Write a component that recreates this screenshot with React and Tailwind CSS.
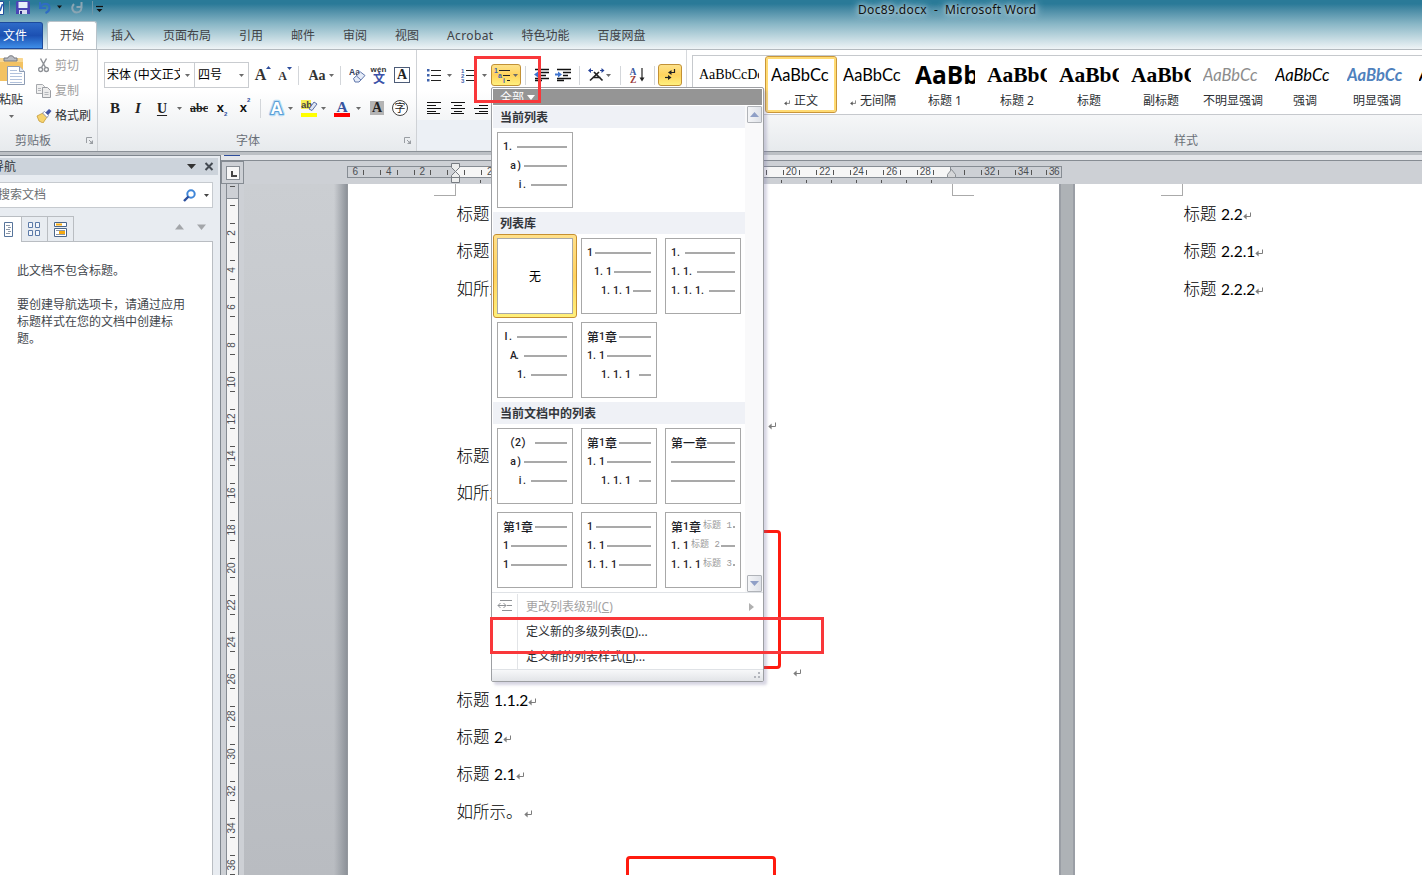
import React from "react";

const CJK = "font-['Noto_Sans','Noto_Sans_CJK_SC',sans-serif]";

/* ---------- small shared pieces ---------- */

function Drop({ className = "", color = "#6b6b6b" }) {
  return (
    <svg className={"shrink-0 " + className} width="5" height="3" viewBox="0 0 5 3">
      <path d="M0 0h5L2.5 3z" fill={color} />
    </svg>
  );
}

function Sep({ className = "" }) {
  return <div className={"h-[19px] w-px shrink-0 bg-[#d3d6da] " + className} />;
}

function Cell({ className = "", children }) {
  return <div className={"flex h-[22px] shrink-0 items-center justify-center " + className}>{children}</div>;
}

function Return({ className = "", color = "#7d7d7d", size = 8 }) {
  return (
    <svg className={"shrink-0 " + className} width={size} height={size} viewBox="0 0 8 8">
      <path d="M7.5 0.5V4.5H1" fill="none" stroke={color} />
      <path d="M0.300 4.500L3.600 1.600V7.400z" fill={color} />
    </svg>
  );
}

function Launcher({ className = "" }) {
  return (
    <svg className={className} width="8" height="8" viewBox="0 0 8 8">
      <path d="M0.5 6V0.5H6" fill="none" stroke="#9a9ea3" />
      <path d="M3 3L6 6" stroke="#9a9ea3" />
      <path d="M7 3v4H3z" fill="#9a9ea3" />
    </svg>
  );
}

/* ---------- title bar ---------- */

function TitleBar() {
  return (
    <div className="flex h-[21px] items-start">
      <svg className="mt-[1px] shrink-0" width="110" height="15" viewBox="0 0 110 15">
        <path d="M0 0.500h3.500v13H0" fill="#fff" stroke="#24509c" />
        <path d="M0 10L2.500 3" stroke="#2b5db5" strokeWidth="1.600" />
        <path d="M9.500 0v14M92.500 0v14" stroke="#6d97a9" />
        <path d="M17 0h12l1 1v12H16V1z" fill="#4a45b5" />
        <rect x="18.500" y="1" width="9" height="6" fill="#e8eefb" />
        <rect x="19" y="9" width="8" height="4" fill="#d8dcf0" />
        <rect x="20" y="10" width="2" height="3" fill="#2f2b86" />
        <path d="M40 1v6h6M40.500 6.500c2-5 8.500-5 9 0c0.300 3-2 4.500-4 5.500" fill="none" stroke="#2f6cc4" strokeWidth="2" />
        <path d="M57 4.500h5l-2.500 3z" fill="#111" />
        <path d="M81.500 1v5h-5M74 3c-3 3-2 8 2.500 8.500c4 0 6-3 4.500-7" fill="none" stroke="#8aa5b3" strokeWidth="2" />
        <path d="M96 5.500h7" stroke="#111" strokeWidth="1.200" />
        <path d="M96.500 8h6l-3 3z" fill="#111" />
      </svg>
      <div className="ml-[748px] mt-[2px] whitespace-pre text-[12px] leading-4 tracking-[0.35px] text-[#111] [text-shadow:0_0_5px_#cfe3ea,0_0_8px_#cfe3ea,0_0_10px_#b4d2dc]">
        Doc89.docx  -  Microsoft Word
      </div>
    </div>
  );
}

function TabStrip() {
  const tabs = ["插入", "页面布局", "引用", "邮件", "审阅", "视图", "Acrobat", "特色功能", "百度网盘"];
  return (
    <div className="flex h-[28px] items-end text-[12px] leading-[18px] text-[#3f4246]">
      <div className="flex h-[27px] w-[43px] items-center rounded-tr-[3px] border border-l-0 border-[#1d4a9c] bg-gradient-to-b from-[#2f6bc8] via-[#1c50b2] to-[#3f8ee8] pl-[3px] text-white">
        文件
      </div>
      <div className="ml-[4px] flex h-[28px] w-[50px] items-center justify-center rounded-t-[3px] border border-b-0 border-[#b9c3ca] bg-white">
        开始
      </div>
      <div className="ml-[14px] flex h-[26px] items-center gap-[28px]">
        {tabs.map((t) => (
          <span key={t} className={t === "Acrobat" ? "tracking-[0.35px]" : ""}>{t}</span>
        ))}
      </div>
    </div>
  );
}

/* ---------- ribbon ---------- */

function Clipboard() {
  return (
    <div className="flex w-[98px] shrink-0 flex-col border-r border-[#cfd2d6]">
      <div className="flex h-[83px]">
        <div className="flex w-[36px] flex-col items-start">
          <svg className="mt-[5px]" width="26" height="32" viewBox="0 0 26 32">
            <path d="M0 3h22l1 1v22H0z" fill="#f3c262" />
            <path d="M0 3h22l1 1v3H0z" fill="#f9d78f" />
            <path d="M4 6V3h4c0-3 6-3 6 0h3v3z" fill="#b9bcc2" stroke="#77797f" />
            <path d="M7.500 11.500h12l5 5v13h-17z" fill="#fff" stroke="#8d9cb4" />
            <path d="M19.500 11.500v5h5" fill="#dfe7f3" stroke="#8d9cb4" />
            <path d="M10 15.500h7M10 18.500h12M10 21.500h12M10 24.500h12M10 27.500h12" stroke="#b2c2dc" />
          </svg>
          <div className="-ml-px mt-[4px] text-[12px] leading-[18px] text-[#2c2f33]">粘贴</div>
          <Drop className="ml-[9px] mt-[6px]" />
        </div>
        <div className="flex flex-col pt-[3px] text-[12px] leading-[25px]">
          <div className="flex h-[25px] items-center text-[#a0a0a0]">
            <svg className="ml-[2px] mr-[6px]" width="11" height="15" viewBox="0 0 11 15">
              <path d="M2.500 0.500L7.500 9.500M8.500 0.500L3.500 9.500" stroke="#8e9196" strokeWidth="1.500" />
              <circle cx="2.600" cy="11.500" r="2" fill="none" stroke="#8e9196" strokeWidth="1.400" />
              <circle cx="8.400" cy="11.500" r="2" fill="none" stroke="#8e9196" strokeWidth="1.400" />
            </svg>
            剪切
          </div>
          <div className="flex h-[25px] items-center text-[#a0a0a0]">
            <svg className="mr-[4px]" width="15" height="14" viewBox="0 0 15 14">
              <path d="M0.500 0.500h6l2 2v7h-8z" fill="#f0f0f0" stroke="#a6a9ad" />
              <path d="M6.500 3.500h5l3 3v7h-8z" fill="#ececec" stroke="#9a9da2" />
              <path d="M2 4.500h3M2 6.500h3M8.500 8.500h4M8.500 10.500h4" stroke="#b5b8bc" />
            </svg>
            复制
          </div>
          <div className="flex h-[25px] items-center text-[#2c2f33]">
            <svg className="mr-[3px]" width="16" height="14" viewBox="0 0 16 14">
              <path d="M1 7l6-3 4 4-4 6L3 12z" fill="#f6d36e" stroke="#c59a37" strokeWidth="0.800" />
              <path d="M6.500 4l2-1.500 4 4-1.500 2z" fill="#fff" stroke="#7880a8" strokeWidth="0.800" />
              <path d="M9.500 3.500L13 0l2.500 2-3.300 4z" fill="#4457a5" />
            </svg>
            格式刷
          </div>
        </div>
      </div>
      <div className="flex h-[16px] items-center pl-[15px] text-[12px] leading-4 text-[#6a7078]">
        剪贴板
        <Launcher className="ml-[35px]" />
      </div>
    </div>
  );
}

const serif = "font-['Liberation_Serif',serif] ";

function FontGroup() {
  return (
    <div className="flex w-[319px] shrink-0 flex-col border-r border-[#cfd2d6] pl-[6px]">
      <div className="mt-[12px] flex h-[26px] items-center">
        <div className="flex h-[26px] w-[91px] items-center border border-[#c9ccd0] bg-white">
          <span className="ml-[2px] w-[73px] overflow-hidden whitespace-nowrap text-[12px] leading-[18px] text-black">宋体 (中文正文)</span>
          <Drop className="ml-[5px]" />
        </div>
        <div className="flex h-[26px] w-[54px] items-center border border-l-0 border-[#c9ccd0] bg-white">
          <span className="ml-[3px] w-[40px] text-[12px] leading-[18px] text-black">四号</span>
          <Drop className="ml-px" />
        </div>
        <Cell className={serif + "ml-[3px] w-[22px] items-start text-[16px] font-bold leading-[22px] text-[#333]"}>
          A
          <svg className="mt-[2px]" width="5" height="3" viewBox="0 0 5 3"><path d="M0 3h5L2.500 0z" fill="#2d4d9c" /></svg>
        </Cell>
        <Cell className={serif + "w-[22px] items-start text-[12px] font-bold leading-[24px] text-[#333]"}>
          A
          <Drop className="mt-[3px]" color="#2d4d9c" />
        </Cell>
        <Sep className="ml-[2px]" />
        <Cell className={serif + "ml-[6px] w-[32px] text-[14px] font-bold text-[#333]"}>
          Aa
          <Drop className="ml-[3px]" />
        </Cell>
        <Sep className="ml-[3px]" />
        <Cell className="ml-[5px] w-[22px]">
          <svg width="17" height="16" viewBox="0 0 17 16">
            <text x="0" y="7.500" fontSize="8.500" fontWeight="bold" fontFamily="Liberation Sans" fill="#33415e">Aa</text>
            <path d="M4.500 11.500l7-6.500 4.500 3.500-6 6.500h-4z" fill="#e6ecf8" stroke="#5f76ab" />
            <path d="M7.500 9l4.500 4" stroke="#5f76ab" />
          </svg>
        </Cell>
        <Cell className="w-[22px]">
          <svg width="18" height="18" viewBox="0 0 18 18">
            <text x="0.500" y="6" fontSize="8" fontWeight="bold" fontFamily="Liberation Sans" fill="#333" textLength="16">wén</text>
            <text x="3" y="16.500" fontSize="12" fontWeight="bold" fontFamily="Noto Sans CJK SC" fill="#3b51a8">文</text>
          </svg>
        </Cell>
        <div className={serif + "ml-[4px] flex h-[16px] w-[16px] items-center justify-center border border-[#4d5c78] bg-white text-[14px] font-bold leading-none text-[#222]"}>A</div>
      </div>
      <div className={serif + "mt-[9px] flex h-[22px] items-center text-[15px] font-bold text-[#222]"}>
        <Cell className="w-[22px]">B</Cell>
        <Cell className="ml-[1px] w-[22px] italic">I</Cell>
        <Cell className="ml-[2px] w-[22px] text-[14px] underline underline-offset-2">U</Cell>
        <Drop className="ml-[4px]" />
        <Cell className="ml-[6px] w-[22px] text-[12px] line-through">abc</Cell>
        <Cell className="ml-[1px] w-[22px] font-['Liberation_Sans'] text-[13px] text-[#111]">
          x<sub className="mt-[9px] text-[6px] leading-none text-[#2d4d9c]">2</sub>
        </Cell>
        <Cell className="ml-[1px] w-[22px] font-['Liberation_Sans'] text-[13px] text-[#111]">
          x<sup className="mb-[10px] text-[6px] leading-none text-[#2d4d9c]">2</sup>
        </Cell>
        <Sep className="ml-[4px]" />
        <Cell className="ml-[5px] w-[22px]">
          <svg width="18" height="18" viewBox="0 0 18 18">
            <text x="2.500" y="15" fontSize="17" fontFamily="Liberation Sans" fill="#fff" stroke="#b9dcf5" strokeWidth="4.500" strokeLinejoin="round">A</text>
            <text x="2.500" y="15" fontSize="17" fontFamily="Liberation Sans" fill="#fff" stroke="#5b9fd6" strokeWidth="2.200">A</text>
            <text x="2.500" y="15" fontSize="17" fontFamily="Liberation Sans" fill="#fff">A</text>
          </svg>
        </Cell>
        <Drop />
        <Cell className="ml-[5px] w-[22px]">
          <svg width="17" height="18" viewBox="0 0 17 18">
            <rect x="0" y="1" width="10" height="9" fill="#f6ef55" />
            <text x="0" y="9" fontSize="9.500" fontWeight="bold" fontFamily="Liberation Sans" fill="#444">ab</text>
            <path d="M8 10l5-7 3 2-5 6.500z" fill="#dfe6f4" stroke="#5b6fa6" />
            <rect x="0" y="14" width="16" height="4" fill="#ff0" />
          </svg>
        </Cell>
        <Drop className="ml-[1px]" />
        <Cell className="ml-[6px] w-[20px]">
          <svg width="16" height="18" viewBox="0 0 16 18">
            <text x="2.500" y="12.500" fontSize="15.500" fontWeight="bold" fontFamily="Liberation Serif" fill="#38549f">A</text>
            <rect y="14" width="16" height="4" fill="#f00" />
          </svg>
        </Cell>
        <Drop className="ml-[4px]" />
        <div className="ml-[9px] flex h-[14px] w-[14px] items-center justify-center bg-[#b4b4b4] text-[14px] leading-none">A</div>
        <svg className="ml-[7px]" width="18" height="18" viewBox="0 0 18 18">
          <circle cx="9" cy="9" r="7.500" fill="#fff" stroke="#444" />
          <text x="3.500" y="13" fontSize="11" fontWeight="400" fontFamily="Noto Sans CJK SC" fill="#222">字</text>
        </svg>
      </div>
      <div className="mt-[14px] flex h-[16px] items-center pl-[132px] text-[12px] leading-4 text-[#6a7078]">
        字体
        <Launcher className="ml-[144px]" />
      </div>
    </div>
  );
}

function AlignIcon({ d, className = "" }) {
  return (
    <svg className={className} width="14" height="12" viewBox="0 0 14 12">
      <path d={d} stroke="#111" />
    </svg>
  );
}

function ParagraphGroup() {
  return (
    <div className="flex w-[270px] shrink-0 flex-col border-r border-[#d6d9dd] pl-[10px]">
      <div className="mt-[12px] flex h-[26px] items-center">
        <svg className="shrink-0" width="15" height="14" viewBox="0 0 15 14">
          <path d="M4 2.500h10M4 7.500h10M4 12.500h10" stroke="#222" />
          <path d="M0 1h2.500v2.500H0zM0 6h2.500v2.500H0zM0 11h2.500v2.500H0z" fill="#3f63ad" />
        </svg>
        <Drop className="ml-[5px]" />
        <svg className="ml-[9px] shrink-0" width="15" height="15" viewBox="0 0 15 15">
          <path d="M5 2.500h9M5 7.500h9M5 12.500h9" stroke="#222" />
          <g fontSize="6" fontWeight="bold" fontFamily="Liberation Sans" fill="#3f63ad">
            <text x="0" y="5">1</text><text x="0" y="10">2</text><text x="0" y="15">3</text>
          </g>
        </svg>
        <Drop className="ml-[6px]" />
        <div className="ml-[4px] flex h-[22px] w-[30px] shrink-0 items-center rounded-[3px] border border-[#c29136] bg-gradient-to-b from-[#fde28a] via-[#ffd35c] to-[#fff07e] pl-[2px]">
          <svg className="shrink-0" width="17" height="15" viewBox="0 0 17 15">
            <path d="M5 2.500h11M9 7.500h7M13 12.500h3" stroke="#222" />
            <g fontSize="7" fontWeight="bold" fontFamily="Liberation Sans" fill="#3f63ad">
              <text x="0" y="5">1</text><text x="4" y="10">a</text><text x="9" y="15">i</text>
            </g>
          </svg>
          <Drop className="ml-[2px]" />
        </div>
        <Sep className="ml-[4px]" />
        <svg className="ml-[7px] shrink-0" width="17" height="14" viewBox="0 0 17 14">
          <path d="M2 1.500h14M8 4.500h8M8 7.500h5M2 10.500h14M2 12.500h7" stroke="#111" strokeWidth="1.300" />
          <path d="M1 6.500l4-3v2h3v2H5v2z" fill="#3f74cf" />
        </svg>
        <svg className="ml-[5px] shrink-0" width="17" height="14" viewBox="0 0 17 14">
          <path d="M2 1.500h14M8 4.500h8M8 7.500h5M2 10.500h14M2 12.500h7" stroke="#111" strokeWidth="1.300" />
          <path d="M7 6.500L3 3.500v2H0v2h3v2z" fill="#3f74cf" />
        </svg>
        <Sep className="ml-[7px]" />
        <svg className="ml-[8px] shrink-0" width="17" height="15" viewBox="0 0 17 15">
          <path d="M2 12.500L11 4M14.500 12.500L6 4M4.500 9.500h8" stroke="#222" strokeWidth="1.700" />
          <path d="M0 2.500l3-2.500v5zM16.500 2.500L13.500 0v5z" fill="#27449a" />
          <path d="M2 2.500h3M12 2.500h3" stroke="#27449a" />
        </svg>
        <Drop className="ml-[1px]" />
        <Sep className="ml-[9px]" />
        <svg className="ml-[8px] shrink-0" width="17" height="17" viewBox="0 0 17 17">
          <text x="0.500" y="8" fontSize="9.500" fontWeight="bold" fontFamily="Liberation Serif" fill="#3b5aa3">A</text>
          <text x="1" y="16" fontSize="9.500" fontWeight="bold" fontFamily="Liberation Serif" fill="#9b3a3a">Z</text>
          <path d="M13 1v11" stroke="#222" strokeWidth="1.200" />
          <path d="M10.500 10.500h5l-2.500 4z" fill="#222" />
        </svg>
        <Sep className="ml-[8px]" />
        <div className="ml-[3px] flex h-[22px] w-[24px] shrink-0 items-center justify-center rounded-[3px] border border-[#c29136] bg-gradient-to-b from-[#fde28a] via-[#ffd35c] to-[#fff07e]">
          <svg width="14" height="14" viewBox="0 0 14 14">
            <path d="M11.500 1v3.500H7" fill="none" stroke="#222" strokeWidth="1.200" />
            <path d="M5 4.500l3.500-2.500v5z" fill="#222" />
            <path d="M2 9.500h4" stroke="#222" strokeWidth="1.200" />
            <path d="M8.500 9.500L5 7v5z" fill="#222" />
          </svg>
        </div>
      </div>
      <div className="mt-[9px] flex h-[22px] items-center gap-[9.500px]">
        <AlignIcon d="M0 0.500h14M0 3.500h9M0 6.500h14M0 9.500h9M0 11.500h13" />
        <AlignIcon d="M0 0.500h14M3 3.500h8M0 6.500h14M3 9.500h8M0 11.500h13" />
        <AlignIcon d="M0 0.500h14M5 3.500h9M0 6.500h14M5 9.500h9M1 11.500h13" />
      </div>
      <div className="-ml-[10px] mt-[1px] h-[30px] bg-[#ecf0f5]" />
    </div>
  );
}

function StyleItem({ label, sample, sampleClass, mark, selected }) {
  return (
    <div
      className={
        "flex h-[57px] w-[72px] shrink-0 flex-col items-center " +
        (selected ? "rounded-[3px] border border-[#c9963a] bg-white p-0 shadow-[inset_0_0_0_2px_#ffdb73]" : "p-px")
      }
    >
      <div className={"mt-[5px] h-[26px] w-[60px] overflow-hidden whitespace-nowrap leading-[26px] " + sampleClass}>{sample}</div>
      <div className="mt-[4px] flex h-[18px] items-center whitespace-nowrap text-[12px] leading-[18px] text-[#2c2f33]">
        {mark && <Return size={6} color="#555" className="mr-[4px] mt-[3px]" />}
        {label}
      </div>
    </div>
  );
}

function StylesGroup() {
  const cal = "font-['Lato',sans-serif] ";
  const ser = "font-['Liberation_Serif',serif] ";
  const items = [
    { label: "", sample: "AaBbCcDc", sampleClass: ser + "text-[14px] text-black" },
    { label: "正文", mark: true, selected: true, sample: "AaBbCc", sampleClass: cal + "text-[16.500px] text-black" },
    { label: "无间隔", mark: true, sample: "AaBbCc", sampleClass: cal + "text-[16.500px] text-black" },
    { label: "标题 1", sample: "AaBb", sampleClass: "font-['Open_Sans'] text-[24.500px] font-bold text-black" },
    { label: "标题 2", sample: "AaBbC", sampleClass: ser + "text-[21.500px] font-bold text-black" },
    { label: "标题", sample: "AaBbC", sampleClass: ser + "text-[21.500px] font-bold text-black" },
    { label: "副标题", sample: "AaBbC", sampleClass: ser + "text-[21.500px] font-bold text-black" },
    { label: "不明显强调", sample: "AaBbCc", sampleClass: cal + "text-[16.500px] italic text-[#8c8c8c]" },
    { label: "强调", sample: "AaBbCc", sampleClass: cal + "text-[16.500px] italic text-black" },
    { label: "明显强调", sample: "AaBbCc", sampleClass: cal + "text-[16.500px] font-bold italic text-[#4f81bd]" },
    { label: "", sample: "A", sampleClass: cal + "text-[16.500px] font-bold italic text-black" },
  ];
  return (
    <div className="flex min-w-0 flex-1 flex-col pl-[5px]">
      <div className="mt-[5px] flex h-[60px] overflow-hidden border border-r-0 border-[#c6c9cd] bg-white">
        {items.map((it, i) => (
          <StyleItem key={i} {...it} />
        ))}
      </div>
      <div className="mt-[18px] h-[16px] pl-[482px] text-[12px] leading-4 text-[#6a7078]">样式</div>
    </div>
  );
}

function Ribbon() {
  return (
    <div className="flex h-[103px] border-b border-t border-b-[#8a9097] border-t-[#b4babf] bg-gradient-to-b from-white from-40% to-[#e7eaed]">
      <Clipboard />
      <FontGroup />
      <ParagraphGroup />
      <StylesGroup />
    </div>
  );
}

/* ---------- navigation pane ---------- */

function NavPane() {
  return (
    <div className="flex w-[221px] shrink-0 flex-col overflow-hidden border-r border-t border-[#7f868e] bg-[#e8ecf1]">
      <div className="mt-[2px] flex h-[17px] w-[218px] items-center bg-[#ccd3db]">
        <span className="-ml-[8px] w-[195px] text-[12px] leading-[17px] text-[#32363c]">导航</span>
        <svg width="27" height="9" viewBox="0 0 27 9">
          <path d="M0 2h9L4.500 7z" fill="#333" />
          <path d="M18.500 1l7 7M25.500 1l-7 7" stroke="#444a52" strokeWidth="2" />
        </svg>
      </div>
      <div className="mt-[7px] flex h-[26px] w-[213px] items-center border border-l-0 border-[#c6cacf] bg-white">
        <span className="-ml-[2px] w-[185px] text-[12px] leading-[18px] text-[#6c6f73]">搜索文档</span>
        <svg width="13" height="13" viewBox="0 0 13 13">
          <circle cx="8" cy="5" r="3.700" fill="#fff" stroke="#3f86d8" strokeWidth="2" />
          <path d="M5.500 7.500L1 12" stroke="#2c4f9c" strokeWidth="2.400" />
        </svg>
        <Drop className="ml-[8px]" color="#444" />
      </div>
      <div className="mt-[8px] flex h-[26px] items-stretch">
        <div className="flex w-[22px] items-center border-r border-t border-[#b9bdc2] bg-white">
          <svg className="ml-[4px]" width="10" height="16" viewBox="0 0 10 16">
            <path d="M0.500 0.500h8v14h-8z" fill="#fff" stroke="#56749b" />
            <path d="M2 3.500h4M4 5.500h3M2 7.500h4M4 9.500h3M2 11.500h4" stroke="#8d98a8" />
          </svg>
        </div>
        <div className="flex w-[26px] items-center justify-center border-b border-r border-t border-[#b9bdc2]">
          <svg width="13" height="15" viewBox="0 0 13 15">
            <path d="M0.500 0.500h4v5h-4zM7.500 0.500h4v5h-4zM0.500 8.500h4v5h-4zM7.500 8.500h4v5h-4z" fill="#f4f7fc" stroke="#5c7aa8" />
          </svg>
        </div>
        <div className="flex w-[26px] items-center justify-center border-b border-r border-t border-[#b9bdc2]">
          <svg width="13" height="15" viewBox="0 0 13 15">
            <path d="M0.500 0.500h12v4h-12zM0.500 6.500h12v8h-12z" fill="#fff" stroke="#4a6589" />
            <path d="M2 1.500h6v2H2zM5 9h6v3H5z" fill="#f5a911" />
            <path d="M2 8.500h9M2 12.500h9" stroke="#8d98a8" />
          </svg>
        </div>
        <div className="flex w-[139px] items-center justify-end gap-[13px] border-b border-[#b9bdc2] pb-[3px] pr-[7px]">
          <svg width="9" height="6" viewBox="0 0 9 6"><path d="M0 5.500h9L4.500 0z" fill="#a3a6aa" /></svg>
          <svg width="9" height="6" viewBox="0 0 9 6"><path d="M0 0.500h9L4.500 6z" fill="#a3a6aa" /></svg>
        </div>
      </div>
      <div className="w-[213px] flex-1 border-r border-[#b9bdc2] bg-white pl-[17px] pt-[20px] text-[12px] leading-[17px] text-[#43474d]">
        <p>此文档不包含标题。</p>
        <p className="mt-[17px] w-[174px]">要创建导航选项卡，请通过应用标题样式在您的文档中创建标题。</p>
      </div>
    </div>
  );
}

/* ---------- rulers ---------- */

const rulerText = "font-['Liberation_Sans',sans-serif] text-[10px] leading-none text-[#4a4d52]";

function VerticalRuler() {
  const nums = Array.from({ length: 18 }, (_, i) => (i + 1) * 2);
  return (
    <div className="flex w-[23px] shrink-0 flex-col items-center bg-[#cdd0d5]">
      <div className="flex h-[23px] w-[23px] items-center justify-center border border-[#868c93]">
        <div className="flex h-[14px] w-[14px] items-end justify-end border border-[#868c93] bg-[#f7f7f7] pb-[2px] pr-[2px]">
          <div className="h-[6px] w-[6px] border-b-2 border-l-2 border-[#444]" />
        </div>
      </div>
      <div className="-ml-px flex min-h-0 flex-1 flex-col overflow-hidden border-x border-[#868c93] bg-[#f6f6f6]">
        <div className="flex h-[15px] w-[11px] shrink-0 flex-col items-center border-b border-[#868c93] bg-[#cdd0d5] pt-[2px]">
          <div className="h-px w-[5px] bg-[#555]" />
        </div>
        <div className="flex h-[15.400px] w-[11px] shrink-0 flex-col items-center pt-[6px]">
          <div className="h-px w-[5px] bg-[#555]" />
        </div>
        {nums.map((n) => (
          <div key={n} className="flex h-[37.200px] w-[11px] shrink-0 flex-col items-center justify-between py-[8.500px]">
            <div className="h-px w-[5px] shrink-0 bg-[#555]" />
            <div className={"flex h-[14px] w-[14px] -rotate-90 items-center justify-center " + rulerText}>{n}</div>
            <div className="h-px w-[5px] shrink-0 bg-[#555]" />
          </div>
        ))}
      </div>
    </div>
  );
}

function HCell({ n }) {
  return (
    <div className="flex h-full w-[33.500px] shrink-0 items-center justify-between px-[8px]">
      <div className="h-[5px] w-px shrink-0 bg-[#555]" />
      <div className={rulerText}>{n}</div>
      <div className="h-[5px] w-px shrink-0 bg-[#555]" />
    </div>
  );
}

function HorizontalRuler() {
  const main = Array.from({ length: 14 }, (_, i) => (i + 1) * 2);
  return (
    <div className="relative h-[23px] bg-[#cdd0d5] pl-[103px] pt-[5px]">
      <div className="flex h-[12px] w-[715px] overflow-hidden border border-[#868c93]">
        <div className="flex w-[108px] shrink-0 justify-end overflow-hidden border-r border-[#868c93]">
          <HCell n={6} />
          <HCell n={4} />
          <HCell n={2} />
          <div className="flex w-[16px] shrink-0 items-center pl-[8px]"><div className="h-[5px] w-px bg-[#555]" /></div>
        </div>
        <div className="flex w-[495px] shrink-0 overflow-hidden border-r border-[#868c93] bg-[#f6f6f6]">
          <div className="flex w-[17px] shrink-0 items-center pl-[8px]"><div className="h-[5px] w-px bg-[#555]" /></div>
          {main.map((n) => (
            <HCell key={n} n={n} />
          ))}
        </div>
        <div className="flex w-[110px] shrink-0 overflow-hidden">
          <div className="flex w-[22px] shrink-0 items-center pl-[13px]"><div className="h-[5px] w-px bg-[#555]" /></div>
          <HCell n={32} />
          <HCell n={34} />
          <div className="flex w-[20px] shrink-0 items-center pl-[6px]">
            <div className="h-[5px] w-px shrink-0 bg-[#555]" />
            <div className={"ml-[2px] tracking-[-0.500px] " + rulerText}>36</div>
          </div>
        </div>
      </div>
      <div className="ml-[133px] mt-[2px] flex gap-[24.060px]">
        {Array.from({ length: 19 }, (_, i) => (
          <div key={i} className="h-[3px] w-px shrink-0 bg-[#555]" />
        ))}
      </div>
      <svg className="absolute left-[207px] top-[2px]" width="10" height="21" viewBox="0 0 10 21">
        <path d="M0.500 0.500h8v4l-4 4 4 4v7h-8v-7l4-4-4-4z" fill="#eceded" stroke="#777c82" />
        <path d="M0.500 14.500h8" stroke="#777c82" />
      </svg>
      <svg className="absolute left-[703px] top-[8px]" width="9" height="9" viewBox="0 0 9 9">
        <path d="M0.500 8.500v-3l4-5 4 5v3z" fill="#d6d7d9" stroke="#8b8f94" />
      </svg>
    </div>
  );
}

/* ---------- document ---------- */

function Line({ cn, num = "" }) {
  return (
    <div className="flex h-[37.300px] items-center whitespace-nowrap text-[16.500px] leading-[24px] text-black">
      <span className="font-['Noto_Sans_CJK_SC',sans-serif] font-light">{cn}</span>
      {num && <span className="ml-[4.500px] pt-[2px] font-['Lato',sans-serif] text-[15.500px]">{num}</span>}
      <Return className={num ? "mt-[6px]" : "ml-[1px] mt-[6px]"} />
    </div>
  );
}

function CropMarks({ className, children }) {
  return <div className={"flex h-[12px] justify-between " + className}>{children}</div>;
}

function Pages() {
  return (
    <div className="flex min-h-0 flex-1 overflow-hidden bg-gradient-to-b from-[#cbced2] to-[#b9bcc1]">
      <div className="ml-[90px] w-[14px] shrink-0 border-r border-[#94989e] bg-gradient-to-r from-transparent to-[#8d9299]" />
      <div className="flex w-[711px] shrink-0 flex-col overflow-hidden bg-white">
        <CropMarks className="pl-[86px] pr-[85px]">
          <div className="h-[12px] w-[22px] border-b border-r border-[#aaa]" />
          <div className="h-[12px] w-[22px] border-b border-l border-[#aaa]" />
        </CropMarks>
        <div className="-mt-[1.500px] flex flex-col pl-[108.500px]">
          <Line cn="标题" num="1" />
          <Line cn="标题" num="1.1" />
          <Line cn="如所示。" />
          <div className="flex h-[130px] items-end pb-[6px]"><Return className="ml-[311.500px]" /></div>
          <Line cn="标题" num="1.1.1" />
          <Line cn="如所示。" />
          <div className="flex h-[169px] items-end pb-[3px]">
            <div className="mb-[8px] ml-[172.500px] h-[139px] w-[152px] rounded-[4px] border-[3px] border-[#ff1b0f]" />
            <Return className="ml-[12px]" />
          </div>
          <Line cn="标题" num="1.1.2" />
          <Line cn="标题" num="2" />
          <Line cn="标题" num="2.1" />
          <Line cn="如所示。" />
          <div className="ml-[169.500px] mt-[27px] h-[60px] w-[150px] shrink-0 rounded-[4px] border-[3px] border-[#ff1b0f]" />
        </div>
      </div>
      <div className="w-[16px] shrink-0 border-x-2 border-[#9a9ea5] bg-[#aeb2b6]" />
      <div className="flex flex-1 flex-col bg-white">
        <CropMarks className="pl-[86px]">
          <div className="h-[12px] w-[22px] border-b border-r border-[#aaa]" />
        </CropMarks>
        <div className="-mt-[1.500px] flex flex-col pl-[108.500px]">
          <Line cn="标题" num="2.2" />
          <Line cn="标题" num="2.2.1" />
          <Line cn="标题" num="2.2.2" />
        </div>
      </div>
    </div>
  );
}

/* ---------- multilevel list menu ---------- */

/* Each row: [text, text offset, line offset, optional grey style name, style offset] measured inside the tile. */
const current = [[["1.", 6, 20], ["a)", 13, 27], ["i.", 20, 34]]];
const library = [
  null,
  [["1", 6, 14], ["1.1", 13, 33], ["1.1.1", 20, 52]],
  [["1.", 6, 20], ["1.1.", 6, 32], ["1.1.1.", 6, 44]],
  [["I.", 6, 20], ["A.", 13, 27], ["1.", 20, 34]],
  [["第1章", 6, 38], ["1.1", 6, 26], ["1.1.1", 20, 58]],
];
const inDocument = [
  [["（2）", 6, 38], ["a)", 13, 27], ["i.", 20, 34]],
  [["第1章", 6, 38], ["1.1", 6, 26], ["1.1.1", 20, 58]],
  [["第一章", 6, 42], ["", 6, 6], ["", 6, 6]],
  [["第1章", 6, 38], ["1", 6, 14], ["1", 6, 14]],
  [["1", 6, 15], ["1.1", 6, 26], ["1.1.1", 6, 38]],
  [["第1章", 6, 68, "标题 1", 38], ["1.1", 6, 56, "标题 2", 26], ["1.1.1", 6, 68, "标题 3", 38]],
];

function glyphClass(c) {
  if (c === ".") return "inline-block w-[6px] font-['Roboto'] text-[10.500px] font-medium";
  if (c < "\u0080") return "inline-block w-[6px] text-center font-['Roboto'] text-[10.500px] font-medium";
  return "inline-block w-[12px] text-center font-['Noto_Sans_CJK_SC'] text-[12px] font-medium";
}

function Glyphs({ text }) {
  return [...text].map((c, i) => (
    <span key={i} className={glyphClass(c)}>
      {c}
    </span>
  ));
}

function Tile({ rows }) {
  if (!rows) {
    return (
      <div className="-m-1 flex h-[84px] w-[84px] rounded-[3px] border border-[#c58f32] bg-gradient-to-b from-[#ffe08a] via-[#ffd25f] to-[#fff07a] p-[3px]">
        <div className="flex flex-1 items-center justify-center border border-[#a8a8a8] bg-white pt-[2px] text-[12px] text-black">无</div>
      </div>
    );
  }
  return (
    <div className="h-[76px] w-[76px] border border-[#a8a8a8] bg-white pt-[4px]">
      {rows.map(([text, at, line, style, styleAt], i) => (
        <div key={i} className="flex h-[19px] items-center overflow-hidden whitespace-nowrap leading-[19px] text-[#1d2026]">
          <span className="flex shrink-0" style={{ marginLeft: at - 1, width: (style ? styleAt : line) - at }}>
            <Glyphs text={text} />
          </span>
          {style && (
            <span
              className="shrink-0 overflow-hidden font-['Liberation_Mono','Noto_Sans_CJK_SC'] text-[9px] text-[#999]"
              style={{ width: line - styleAt }}
            >
              {style}
            </span>
          )}
          <span className="h-[2px] shrink-0 bg-[#a9a9a9]" style={{ width: 70 - line }} />
        </div>
      ))}
    </div>
  );
}

function Section({ title, tiles }) {
  return (
    <div>
      <div className="h-[22px] bg-[#eff1f6] pl-[7px] pt-px text-[12px] font-bold leading-[22px] text-[#33363b]">{title}</div>
      <div className="grid grid-cols-[repeat(3,76px)] gap-2 p-1">
        {tiles.map((rows, i) => (
          <Tile key={i} rows={rows} />
        ))}
      </div>
    </div>
  );
}

function ScrollButton({ d }) {
  return (
    <div className="flex h-[17px] w-[15px] items-center justify-center rounded-[1px] border border-[#b0b3b8] bg-gradient-to-r from-[#f4f5f7] to-[#dfe2e8]">
      <svg width="9" height="5" viewBox="0 0 9 5"><path d={d} fill="#8f9fc6" /></svg>
    </div>
  );
}

function MenuItem({ children, icon, disabled, arrow }) {
  return (
    <div className={"flex h-[25px] items-center text-[12px] leading-[18px] " + (disabled ? "text-[#a3a3a3]" : "text-[#2c2f33]")}>
      <div className="flex h-full w-[26px] items-center justify-center border-r border-[#e2e4e7]">{icon}</div>
      <span className="ml-[8px] flex-1 whitespace-nowrap">{children}</span>
      {arrow && <svg className="mr-[9px]" width="5" height="8" viewBox="0 0 5 8"><path d="M0 0l5 4-5 4z" fill="#b0b0b0" /></svg>}
    </div>
  );
}

function ListMenu() {
  return (
    <div className="absolute left-[491px] top-[87px] flex h-[595px] w-[273px] flex-col rounded-[2px] border border-[#9d9fa3] bg-white shadow-[3px_3px_3px_rgba(120,115,160,0.3)]">
      <div className="mx-px mt-px flex h-[16px] shrink-0 items-center overflow-hidden bg-[#959595] pl-[7px] text-[12px] leading-[17px] text-white">
        全部
        <svg className="ml-[3px]" width="8" height="5" viewBox="0 0 8 5"><path d="M0 0h8L4 5z" fill="#fff" /></svg>
      </div>
      <div className="flex h-[488px] shrink-0 border-b border-[#dfe2e6] pl-px pt-px">
        <div className="w-[252px]">
          <Section title="当前列表" tiles={current} />
          <Section title="列表库" tiles={library} />
          <Section title="当前文档中的列表" tiles={inDocument} />
        </div>
        <div className="flex flex-1 flex-col items-center justify-between bg-[#f9f9fa]">
          <ScrollButton d="M0 5h9L4.500 0z" />
          <ScrollButton d="M0 0h9L4.500 5z" />
        </div>
      </div>
      <div className="pt-px">
        <MenuItem
          disabled
          arrow
          icon={
            <svg className="mb-[2px]" width="15" height="13" viewBox="0 0 15 13">
              <path d="M3 1.500h12M10 6.500h5M5 11.500h10M1 6.500h8" stroke="#8f9296" />
              <path d="M3.500 4L1 6.500 3.500 9M6.500 4l2.500 2.500L6.500 9" fill="none" stroke="#8f9296" />
            </svg>
          }
        >
          更改列表级别(<u>C</u>)
        </MenuItem>
        <MenuItem>定义新的多级列表(<u>D</u>)...</MenuItem>
        <MenuItem>定义新的列表样式(<u>L</u>)...</MenuItem>
      </div>
      <div className="flex flex-1 items-end justify-end border-t border-[#dfe2e6] bg-gradient-to-b from-[#f7f8f9] to-[#e2e4e8] p-[2px]">
        <svg width="8" height="7" viewBox="0 0 8 7">
          <path d="M5 0h2v2H5zM1 4h2v2H1zM5 4h2v2H5z" fill="#b3b6bd" />
        </svg>
      </div>
    </div>
  );
}

/* ---------- window ---------- */

export default function App() {
  return (
    <div className={"relative flex h-[875px] w-[1422px] flex-col overflow-hidden bg-[#bcc0c5] " + CJK}>
      <div className="h-[49px] shrink-0 bg-gradient-to-b from-[#2a7a98] from-8% via-[#8bb8c7] via-50% to-[#eff4f6]">
        <TitleBar />
        <TabStrip />
      </div>
      <Ribbon />
      <div className="mt-[3px] flex min-h-0 flex-1">
        <NavPane />
        <div className="flex min-w-0 flex-1 flex-col">
          <div className="h-[6px] shrink-0 border-b border-[#868c93] bg-[#e4e6ea] pl-[3px]">
            <div className="h-px w-[16px] bg-[#2d4d9c]" />
          </div>
          <div className="flex min-h-0 flex-1">
            <VerticalRuler />
            <div className="flex min-w-0 flex-1 flex-col">
              <HorizontalRuler />
              <Pages />
            </div>
          </div>
        </div>
      </div>
      <ListMenu />
      <div className="absolute left-[474px] top-[56px] h-[47px] w-[67px] border-[3px] border-[#f9373a]" />
      <div className="absolute left-[490px] top-[617px] h-[37px] w-[334px] border-[3px] border-[#f9373a]" />
    </div>
  );
}
